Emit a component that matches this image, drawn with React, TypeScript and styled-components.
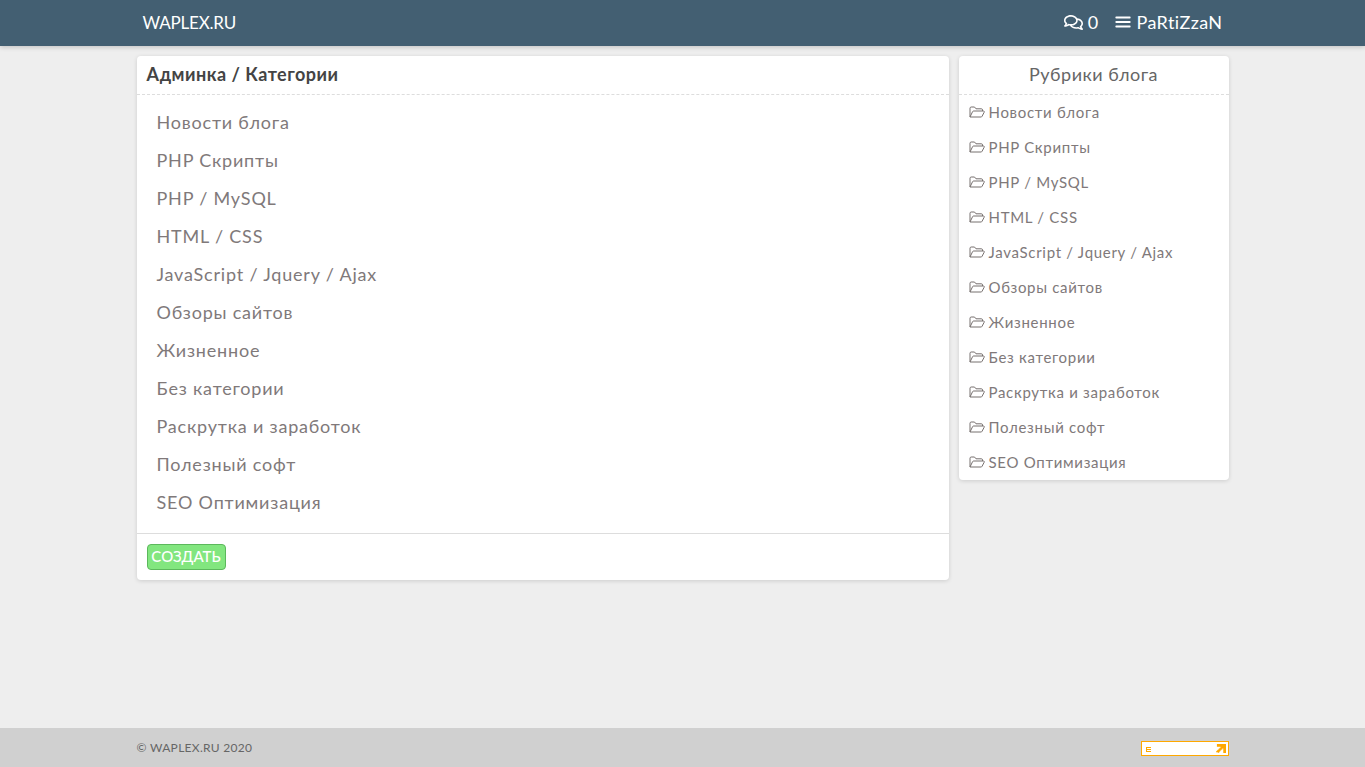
import styled, { createGlobalStyle } from 'styled-components';
import { FaRegComments } from 'react-icons/fa';
import { FiMenu } from 'react-icons/fi';

const CATEGORIES = [
	'Новости блога',
	'PHP Скрипты',
	'PHP / MySQL',
	'HTML / CSS',
	'JavaScript / Jquery / Ajax',
	'Обзоры сайтов',
	'Жизненное',
	'Без категории',
	'Раскрутка и заработок',
	'Полезный софт',
	'SEO Оптимизация',
];

// -----------------------------------------------------------------------------

function FolderIcon() {
	return (
		<svg width="16" height="12" viewBox="0 0 16 12" fill="none" stroke="#77706f" strokeWidth="1">
			<path d="M1 11V2.2C1 1.5 1.5 1 2.2 1H5.5L7 2.8H12.5C13.2 2.8 13.5 3.3 13.5 4V5" />
			<path d="M1 11L3.6 5.6C3.8 5.2 4.1 5 4.6 5H14.5C15.2 5 15.5 5.6 15.2 6.2L13 10.4C12.8 10.8 12.5 11 12 11Z" />
		</svg>
	);
}

export default function App() {
	return (
		<Page>
			<GlobalStyle />
			<Header>
				<HeaderInner>
					<Logo>WAPLEX.RU</Logo>
					<UserNav>
						<NavItem>
							<FaRegComments size={19} /> 0
						</NavItem>
						<NavItem>
							<FiMenu size={18} strokeWidth={2.4} /> PaRtiZzaN
						</NavItem>
					</UserNav>
				</HeaderInner>
			</Header>

			<Main>
				<MainCard>
					<MainTitle>Админка / Категории</MainTitle>
					<AdminList>
						{CATEGORIES.map((name) => (
							<AdminRow key={name}>{name}</AdminRow>
						))}
					</AdminList>
					<CardFooter>
						<CreateButton>СОЗДАТЬ</CreateButton>
					</CardFooter>
				</MainCard>

				<SideCard>
					<SideTitle>Рубрики блога</SideTitle>
					{CATEGORIES.map((name) => (
						<SideRow key={name}>
							<FolderIcon /> {name}
						</SideRow>
					))}
				</SideCard>
			</Main>

			<Footer>
				<FooterInner>
					<Copyright>© WAPLEX.RU 2020</Copyright>
					<Counter>
						<svg width="5" height="5" viewBox="0 0 5 5" fill="#ffa800">
							<path d="M0 0h5v1H1v1h4v1H1v1h4v1H0z" />
						</svg>
						<svg width="10" height="10" viewBox="0 0 11 11" fill="#ffa800">
							<path d="M1 0h10v10H8V5H7v1H6v1H5v1H4v1H3v1H2V9H0V8h1V7h1V6h1V5h1V4h1V3H1z" />
						</svg>
					</Counter>
				</FooterInner>
			</Footer>
		</Page>
	);
}

// -----------------------------------------------------------------------------

const GlobalStyle = createGlobalStyle`
	html, body {
		margin: 0;
		padding: 0;
		background: #eeeeee;
	}

	body {
		font-family: "Lato", "Noto Sans", sans-serif;
	}
`;

const Page = styled.div`
	display: flex;
	flex-direction: column;
	height: 767px;
	overflow: hidden;
`;

const Header = styled.header`
	background: #435f72;
	box-shadow: 0 1px 5px rgba(0, 0, 0, 0.2);
	flex: 0 0 46px;
`;

const HeaderInner = styled.div`
	align-items: center;
	box-sizing: border-box;
	display: flex;
	height: 44px;
	justify-content: space-between;
	margin: 0 auto;
	padding: 0 6px;
	width: 1092px;
`;

const Logo = styled.a`
	color: #fff;
	font-size: 17px;
	letter-spacing: -0.2px;
`;

const UserNav = styled.nav`
	display: flex;
	gap: 15px;
`;

const NavItem = styled.a`
	align-items: center;
	color: #fff;
	display: flex;
	font-size: 18px;
	gap: 5px;
	letter-spacing: 0.4px;
`;

const Main = styled.main`
	align-items: flex-start;
	display: flex;
	flex: 1;
	gap: 10px;
	margin: 0 auto;
	padding-top: 10px;
	width: 1092px;
`;

const Card = styled.section`
	background: #fff;
	border-radius: 4px;
	box-shadow: 0 1px 4px rgba(0, 0, 0, 0.14);
`;

const MainCard = styled(Card)`
	width: 812px;
`;

const SideCard = styled(Card)`
	width: 270px;
`;

const MainTitle = styled.h1`
	border-bottom: 1px dashed #dddddd;
	color: #444;
	font-size: 18px;
	font-weight: 700;
	height: 38px;
	letter-spacing: 0.5px;
	line-height: 37px;
	margin: 0;
	padding: 0 10px;
`;

const SideTitle = styled.h2`
	border-bottom: 1px dashed #dddddd;
	color: #666;
	font-size: 18px;
	font-weight: 400;
	height: 38px;
	letter-spacing: 0.5px;
	line-height: 37px;
	margin: 0;
	text-align: center;
`;

const AdminList = styled.div`
	padding: 10px 20px;
`;

const AdminRow = styled.a`
	color: #80797a;
	display: block;
	font-size: 18px;
	height: 38px;
	letter-spacing: 0.8px;
	line-height: 35px;
`;

const CardFooter = styled.div`
	border-top: 1px solid #dddddd;
	padding: 10px;
`;

const CreateButton = styled.button`
	background: #82e67f;
	border: 1px solid #5cb85c;
	border-radius: 4px;
	color: #fff;
	display: block;
	font-family: inherit;
	font-size: 15px;
	font-weight: 500;
	height: 26px;
	line-height: 22px;
	padding: 0 0 2px;
	width: 79px;
`;

const SideRow = styled.a`
	align-items: center;
	box-sizing: border-box;
	color: #80797a;
	display: flex;
	font-size: 15px;
	gap: 4px;
	height: 35px;
	letter-spacing: 0.7px;
	padding: 0 0 2px 10px;
`;

const Footer = styled.footer`
	background: #d0d0d0;
	flex: 0 0 39px;
`;

const FooterInner = styled.div`
	align-items: center;
	display: flex;
	height: 39px;
	justify-content: space-between;
	margin: 0 auto;
	width: 1092px;
`;

const Copyright = styled.span`
	color: #666;
	font-size: 12px;
	letter-spacing: 0.3px;
`;

const Counter = styled.div`
	align-items: center;
	background: #fff;
	border: 1px solid #ffa800;
	box-sizing: border-box;
	display: flex;
	height: 15px;
	justify-content: space-between;
	margin-top: 2px;
	padding: 1px 2px 0 4px;
	width: 88px;
`;
